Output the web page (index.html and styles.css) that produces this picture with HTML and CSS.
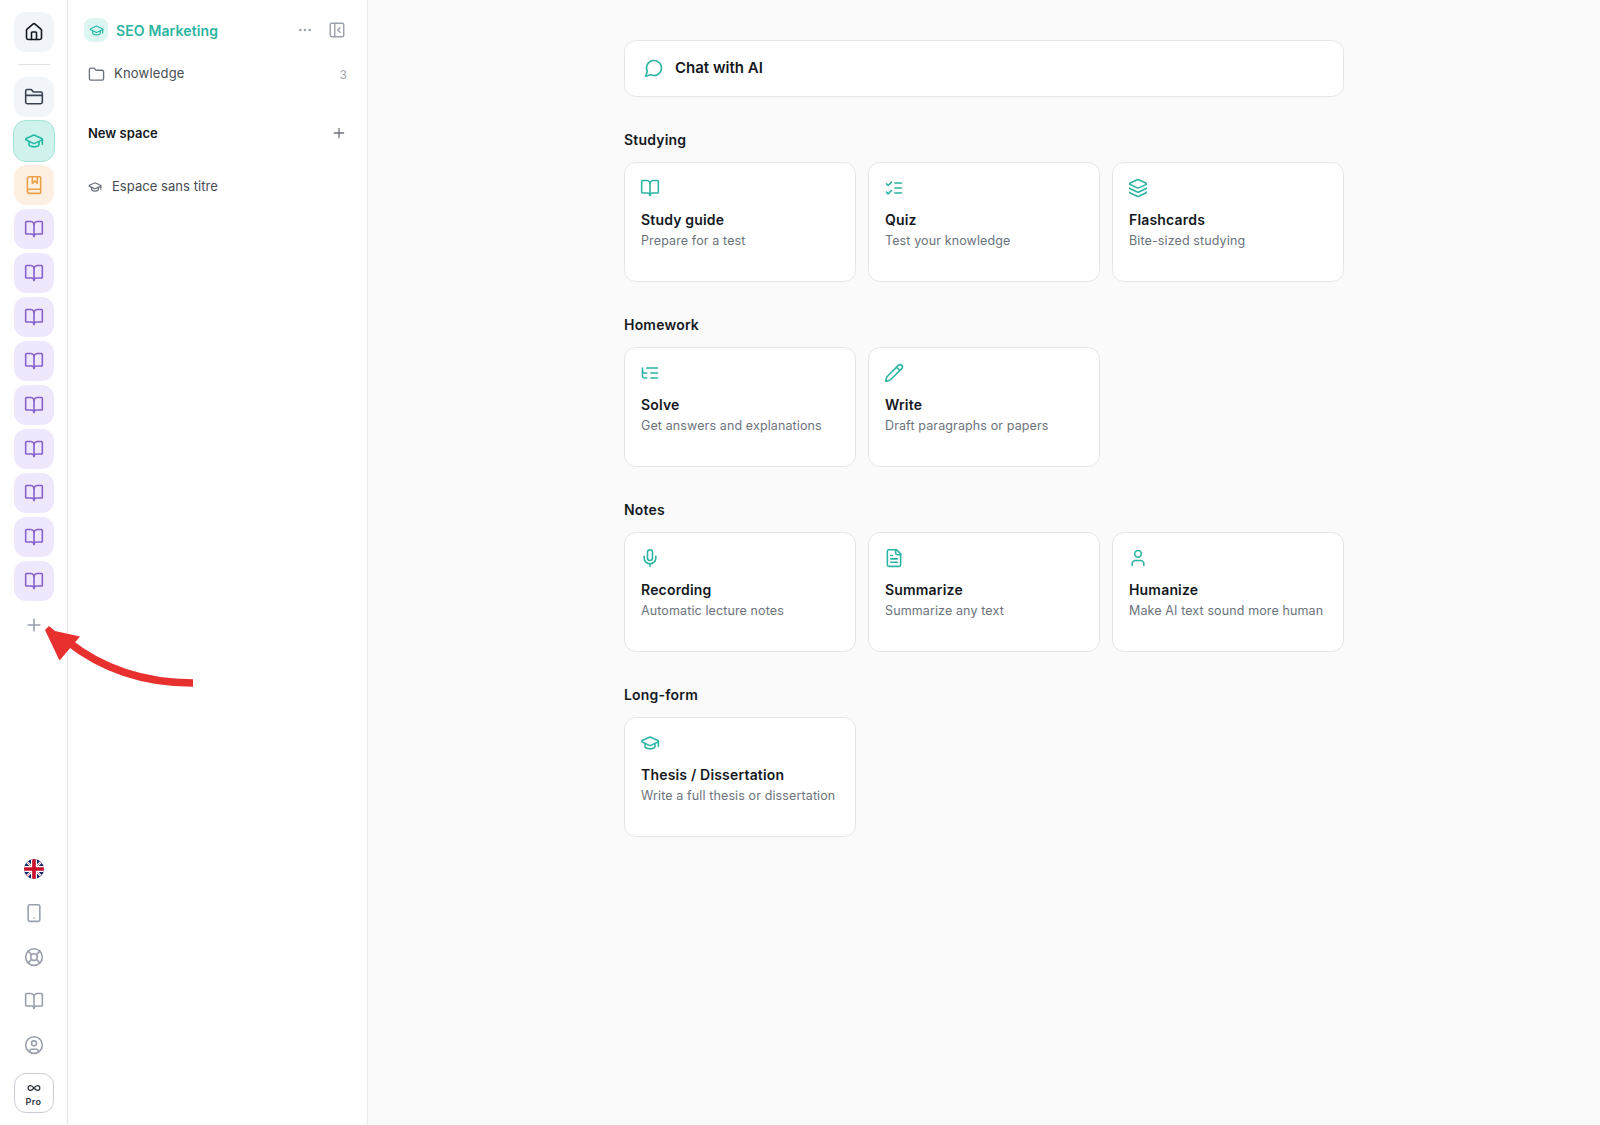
FILE: index.html
```html
<!DOCTYPE html>
<html lang="en">
<head>
<meta charset="utf-8">
<title>SEO Marketing</title>
<link rel="stylesheet" href="styles.css">
</head>
<body>
<svg class="sprite" aria-hidden="true">
  <symbol id="home" viewBox="0 0 24 24"><path d="M15 21v-8a1 1 0 0 0-1-1h-4a1 1 0 0 0-1 1v8"/><path d="M3 10a2 2 0 0 1 .709-1.528l7-5.999a2 2 0 0 1 2.582 0l7 5.999A2 2 0 0 1 21 10v9a2 2 0 0 1-2 2H5a2 2 0 0 1-2-2z"/></symbol>
  <symbol id="folder" viewBox="0 0 24 24"><path d="M20 20a2 2 0 0 0 2-2V8a2 2 0 0 0-2-2h-7.9a2 2 0 0 1-1.69-.9L9.6 3.9A2 2 0 0 0 7.93 3H4a2 2 0 0 0-2 2v13a2 2 0 0 0 2 2Z"/></symbol>
  <symbol id="folder-closed" viewBox="0 0 24 24"><path d="M20 20a2 2 0 0 0 2-2V8a2 2 0 0 0-2-2h-7.9a2 2 0 0 1-1.69-.9L9.6 3.9A2 2 0 0 0 7.93 3H4a2 2 0 0 0-2 2v13a2 2 0 0 0 2 2Z"/><path d="M2 10h20"/></symbol>
  <symbol id="cap" viewBox="0 0 24 24"><path d="M21.42 10.922a1 1 0 0 0-.019-1.838L12.83 5.18a2 2 0 0 0-1.66 0L2.6 9.08a1 1 0 0 0 0 1.832l8.57 3.908a2 2 0 0 0 1.66 0z"/><path d="M22 10v6"/><path d="M6 12.5V16a6 3 0 0 0 12 0v-3.5"/></symbol>
  <symbol id="bookmark" viewBox="0 0 24 24"><path d="M10 2v8l3-3 3 3V2"/><path d="M4 19.5v-15A2.5 2.5 0 0 1 6.5 2H19a1 1 0 0 1 1 1v18a1 1 0 0 1-1 1H6.5a1 1 0 0 1 0-5H20"/></symbol>
  <symbol id="book" viewBox="0 0 24 24"><path d="M12 7v14"/><path d="M3 18a1 1 0 0 1-1-1V4a1 1 0 0 1 1-1h5a4 4 0 0 1 4 4 4 4 0 0 1 4-4h5a1 1 0 0 1 1 1v13a1 1 0 0 1-1 1h-6a3 3 0 0 0-3 3 3 3 0 0 0-3-3z"/></symbol>
  <symbol id="plus" viewBox="0 0 24 24"><path d="M5 12h14M12 5v14"/></symbol>
  <symbol id="phone" viewBox="0 0 24 24"><rect x="5" y="2" width="14" height="20" rx="2"/><path d="M12 18h.01"/></symbol>
  <symbol id="help" viewBox="0 0 24 24"><circle cx="12" cy="12" r="10"/><circle cx="12" cy="12" r="4"/><path d="m4.93 4.93 4.24 4.24M14.83 9.17l4.24-4.24M14.83 14.83l4.24 4.24M9.17 14.83l-4.24 4.24"/></symbol>
  <symbol id="account" viewBox="0 0 24 24"><circle cx="12" cy="12" r="10"/><circle cx="12" cy="10" r="3"/><path d="M7 20.662V19a2 2 0 0 1 2-2h6a2 2 0 0 1 2 2v1.662"/></symbol>
  <symbol id="infinity" viewBox="0 0 24 24"><path d="M6 16c5 0 7-8 12-8a4 4 0 0 1 0 8c-5 0-7-8-12-8a4 4 0 1 0 0 8"/></symbol>
  <symbol id="dots" viewBox="0 0 24 24"><circle cx="12" cy="12" r="1"/><circle cx="19" cy="12" r="1"/><circle cx="5" cy="12" r="1"/></symbol>
  <symbol id="panel" viewBox="0 0 24 24"><rect x="3" y="3" width="18" height="18" rx="2"/><path d="M9 3v18M16 15l-3-3 3-3"/></symbol>
  <symbol id="chat" viewBox="0 0 24 24"><path d="M7.9 20A9 9 0 1 0 4 16.1L2 22Z"/></symbol>
  <symbol id="checks" viewBox="0 0 24 24"><path d="m3 17 2 2 4-4M3 7l2 2 4-4M13 6h8M13 12h8M13 18h8"/></symbol>
  <symbol id="layers" viewBox="0 0 24 24"><path d="M12.83 2.18a2 2 0 0 0-1.66 0L2.6 6.08a1 1 0 0 0 0 1.83l8.58 3.91a2 2 0 0 0 1.66 0l8.58-3.9a1 1 0 0 0 0-1.83z"/><path d="M2 12a1 1 0 0 0 .58.91l8.6 3.91a2 2 0 0 0 1.65 0l8.58-3.9A1 1 0 0 0 22 12"/><path d="M2 17a1 1 0 0 0 .58.91l8.6 3.91a2 2 0 0 0 1.65 0l8.58-3.9A1 1 0 0 0 22 17"/></symbol>
  <symbol id="tree" viewBox="0 0 24 24"><path d="M21 12h-8M21 6H8M21 18h-8"/><path d="M3 6v4c0 1.1.9 2 2 2h3"/><path d="M3 10v6c0 1.1.9 2 2 2h3"/></symbol>
  <symbol id="pencil" viewBox="0 0 24 24"><path d="M21.174 6.812a1 1 0 0 0-3.986-3.987L3.842 16.174a2 2 0 0 0-.5.83l-1.321 4.352a.5.5 0 0 0 .623.622l4.353-1.32a2 2 0 0 0 .83-.497z"/><path d="m15 5 4 4"/></symbol>
  <symbol id="mic" viewBox="0 0 24 24"><path d="M12 2a3 3 0 0 0-3 3v7a3 3 0 0 0 6 0V5a3 3 0 0 0-3-3Z"/><path d="M19 10v2a7 7 0 0 1-14 0v-2M12 19v3"/></symbol>
  <symbol id="file" viewBox="0 0 24 24"><path d="M15 2H6a2 2 0 0 0-2 2v16a2 2 0 0 0 2 2h12a2 2 0 0 0 2-2V7Z"/><path d="M14 2v4a2 2 0 0 0 2 2h4M10 9H8M16 13H8M16 17H8"/></symbol>
  <symbol id="user" viewBox="0 0 24 24"><path d="M19 21v-2a4 4 0 0 0-4-4H9a4 4 0 0 0-4 4v2"/><circle cx="12" cy="7" r="4"/></symbol>
</svg>

<div class="app">
  <nav class="rail">
    <a class="tile slate dark"><svg class="icon"><use href="#home"/></svg></a>
    <hr class="rail-rule">
    <div class="rail-group">
      <a class="tile slate"><svg class="icon"><use href="#folder-closed"/></svg></a>
      <a class="tile teal"><svg class="icon"><use href="#cap"/></svg></a>
      <a class="tile orange"><svg class="icon"><use href="#bookmark"/></svg></a>
      <a class="tile purple"><svg class="icon"><use href="#book"/></svg></a>
      <a class="tile purple"><svg class="icon"><use href="#book"/></svg></a>
      <a class="tile purple"><svg class="icon"><use href="#book"/></svg></a>
      <a class="tile purple"><svg class="icon"><use href="#book"/></svg></a>
      <a class="tile purple"><svg class="icon"><use href="#book"/></svg></a>
      <a class="tile purple"><svg class="icon"><use href="#book"/></svg></a>
      <a class="tile purple"><svg class="icon"><use href="#book"/></svg></a>
      <a class="tile purple"><svg class="icon"><use href="#book"/></svg></a>
      <a class="tile purple"><svg class="icon"><use href="#book"/></svg></a>
      <a class="tile plain"><svg class="icon"><use href="#plus"/></svg></a>
    </div>
    <div class="rail-group rail-bottom">
      <a class="tile">
        <svg class="flag" viewBox="0 0 60 60">
          <defs><clipPath id="disc"><circle cx="30" cy="30" r="30"/></clipPath></defs>
          <g clip-path="url(#disc)">
            <rect width="60" height="60" fill="#10246c"/>
            <path d="M0 0 60 60M60 0 0 60" stroke="#fff" stroke-width="7"/>
            <path d="M0 0 60 60M60 0 0 60" stroke="#d8495c" stroke-width="2"/>
            <path d="M30 0v60M0 30h60" stroke="#fff" stroke-width="18"/>
            <path d="M30 0v60M0 30h60" stroke="#c8102e" stroke-width="11"/>
          </g>
        </svg>
      </a>
      <a class="tile plain"><svg class="icon"><use href="#phone"/></svg></a>
      <a class="tile plain"><svg class="icon"><use href="#help"/></svg></a>
      <a class="tile plain"><svg class="icon"><use href="#book"/></svg></a>
      <a class="tile plain"><svg class="icon"><use href="#account"/></svg></a>
    </div>
    <a class="tile pro"><svg class="icon"><use href="#infinity"/></svg><span>Pro</span></a>
  </nav>

  <aside class="panel">
    <header class="panel-head">
      <span class="badge"><svg class="icon"><use href="#cap"/></svg></span>
      <h1 class="panel-title">SEO Marketing</h1>
      <svg class="icon small"><use href="#dots"/></svg>
      <svg class="icon small collapse"><use href="#panel"/></svg>
    </header>
    <a class="row knowledge"><svg class="icon small"><use href="#folder"/></svg><span class="row-label">Knowledge</span><span class="count">3</span></a>
    <div class="row new-space"><h2 class="row-label">New space</h2><svg class="icon small"><use href="#plus"/></svg></div>
    <a class="row space"><svg class="icon tiny"><use href="#cap"/></svg><span class="row-label">Espace sans titre</span></a>
  </aside>

  <main class="main">
    <div class="content">
      <a class="chat"><svg class="icon"><use href="#chat"/></svg><span>Chat with AI</span></a>

      <section class="section">
        <h2 class="section-title">Studying</h2>
        <div class="cards">
          <a class="card"><svg class="icon"><use href="#book"/></svg><h3>Study guide</h3><p>Prepare for a test</p></a>
          <a class="card"><svg class="icon"><use href="#checks"/></svg><h3>Quiz</h3><p>Test your knowledge</p></a>
          <a class="card"><svg class="icon"><use href="#layers"/></svg><h3>Flashcards</h3><p>Bite-sized studying</p></a>
        </div>
      </section>

      <section class="section">
        <h2 class="section-title">Homework</h2>
        <div class="cards">
          <a class="card"><svg class="icon"><use href="#tree"/></svg><h3>Solve</h3><p>Get answers and explanations</p></a>
          <a class="card"><svg class="icon"><use href="#pencil"/></svg><h3>Write</h3><p>Draft paragraphs or papers</p></a>
        </div>
      </section>

      <section class="section">
        <h2 class="section-title">Notes</h2>
        <div class="cards">
          <a class="card"><svg class="icon"><use href="#mic"/></svg><h3>Recording</h3><p>Automatic lecture notes</p></a>
          <a class="card"><svg class="icon"><use href="#file"/></svg><h3>Summarize</h3><p>Summarize any text</p></a>
          <a class="card"><svg class="icon"><use href="#user"/></svg><h3>Humanize</h3><p>Make AI text sound more human</p></a>
        </div>
      </section>

      <section class="section">
        <h2 class="section-title">Long-form</h2>
        <div class="cards">
          <a class="card"><svg class="icon"><use href="#cap"/></svg><h3>Thesis / Dissertation</h3><p>Write a full thesis or dissertation</p></a>
        </div>
      </section>
    </div>
  </main>
</div>

<svg class="arrow" viewBox="0 0 156 66">
  <path d="M152 59C112 59 66 49 26 17" fill="none" stroke="#e8302f" stroke-width="7.5"/>
  <path d="M4 6 8 2 14 7 39 12.500 18.500 36.500Z" fill="#e8302f"/>
</svg>
</body>
</html>
```

FILE: styles.css
```css
* { box-sizing: border-box; }

body {
  margin: 0;
  font-family: Inter, "Liberation Sans", sans-serif;
  color: #15191f;
  background: #fafafb;
}

h1, h2, h3, p { margin: 0; }

.sprite { display: none; }

.icon {
  display: block;
  flex: none;
  width: 20px;
  height: 20px;
  fill: none;
  stroke: currentColor;
  stroke-width: 1.9;
  stroke-linecap: round;
  stroke-linejoin: round;
}
.icon.small { width: 16px; height: 16px; }
.icon.tiny { width: 14px; height: 14px; stroke-width: 2.1; }

.app { display: flex; height: 1125px; }

/* icon rail */
.rail {
  display: flex;
  flex-direction: column;
  align-items: center;
  width: 68px;
  padding: 12px 0;
  background: #fff;
  border-right: 1px solid #e3e6ea;
}
.rail-rule {
  width: 32px;
  height: 1px;
  margin: 12px 0;
  border: 0;
  background: #dfe3e8;
}
.rail-group { display: flex; flex-direction: column; gap: 4px; }
.rail-bottom { margin-top: auto; margin-bottom: 8px; }

.tile {
  display: flex;
  align-items: center;
  justify-content: center;
  width: 40px;
  height: 40px;
  border-radius: 12px;
}
.slate { background: #f1f4f9; color: #374151; }
.dark { color: #111820; }
.teal {
  background: #cff3ec;
  color: #22b8a3;
  width: 42px;
  height: 42px;
  margin: -1px;
  border: 1px solid #a5e3d8;
  border-radius: 13px;
}
.orange { background: #fdf0e2; color: #eaa14a; }
.purple { background: #efe8fc; color: #8560c9; }
.plain { color: #98a1ad; }
.flag { width: 20px; height: 20px; }
.pro {
  flex-direction: column;
  gap: 1px;
  padding-top: 2px;
  border: 1px solid #c9cdd3;
  color: #30363e;
  font-size: 9px;
  font-weight: 600;
  line-height: 12px;
  letter-spacing: 0.4px;
}
.pro .icon { width: 14px; height: 14px; stroke-width: 2.2; }

/* space panel */
.panel {
  width: 300px;
  padding: 16px 20px 0;
  background: #fff;
  border-right: 1px solid #e8eaed;
}
.panel-head {
  display: flex;
  align-items: center;
  height: 28px;
  margin-left: -4px;
  padding-right: 1px;
  color: #9aa1aa;
}
.badge {
  display: flex;
  align-items: center;
  justify-content: center;
  width: 24px;
  height: 24px;
  margin-right: 8px;
  border-radius: 8px;
  background: #dcf7f2;
  color: #22b8a3;
}
.badge .icon { width: 15px; height: 15px; }
.panel-title {
  flex: 1;
  padding-top: 2px;
  color: #2bb5a0;
  font-size: 14px;
  font-weight: 600;
  line-height: 24px;
  letter-spacing: 0.13px;
}
.icon.collapse { width: 18px; height: 18px; margin-left: 15px; }

.row { display: flex; align-items: center; height: 32px; font-size: 13px; color: #464c55; }
.row-label { flex: 1; }
.knowledge { margin-top: 14px; gap: 9px; letter-spacing: 0.2px; }
.knowledge .icon { width: 17px; height: 17px; color: #6a727d; }
.knowledge .row-label { padding-bottom: 2px; }
.count { color: #a0a6ae; font-size: 12px; }
.new-space { margin-top: 27px; color: #6a727d; }
.new-space .row-label { font-size: 13px; font-weight: 600; color: #15191f; }
.space { margin-top: 22px; gap: 10px; }
.space .row-label { padding-bottom: 2px; letter-spacing: 0.05px; }
.space .icon { color: #6a727d; }

/* main area */
.main {
  flex: 1;
  display: flex;
  justify-content: center;
  padding-top: 40px;
}
.content { width: 720px; }
.chat {
  display: flex;
  align-items: center;
  gap: 11px;
  height: 57px;
  padding: 0 19px 2px;
  background: #fff;
  border: 1px solid #e3e7eb;
  border-radius: 12px;
  font-size: 15px;
  font-weight: 600;
}
.chat .icon, .card .icon { color: #2bb5a3; }

.section { padding-top: 33px; }
.section-title {
  height: 32px;
  font-size: 14px;
  font-weight: 600;
  line-height: 20px;
  letter-spacing: 0.2px;
}
.cards { display: grid; grid-template-columns: repeat(3, 232px); gap: 12px; }
.card {
  height: 120px;
  padding: 15px 16px;
  background: #fff;
  border: 1px solid #e3e7eb;
  border-radius: 12px;
}
.card .icon { margin-left: -1px; }
.card h3 {
  margin-top: 12px;
  font-size: 14px;
  font-weight: 600;
  line-height: 20px;
  letter-spacing: 0.18px;
}
.card p {
  margin-top: 1px;
  color: #6c737d;
  font-size: 12.5px;
  line-height: 20px;
  letter-spacing: 0.12px;
  white-space: nowrap;
}

/* annotation arrow laid over the page */
.arrow {
  position: absolute;
  left: 41px;
  top: 624px;
  width: 156px;
  height: 66px;
  pointer-events: none;
}
```
